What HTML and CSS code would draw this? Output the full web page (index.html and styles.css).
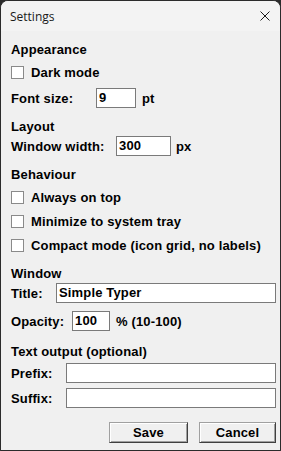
FILE: index.html
```html
<!DOCTYPE html>
<html lang="en">
<head>
  <meta charset="UTF-8" />
  <title>Settings</title>
  <link rel="stylesheet" href="styles.css">
</head>
<body>

  <div class="window">
    <div class="titlebar">
      <span class="title">Settings</span>
      <svg class="close" width="10" height="10" viewBox="0 0 10 10">
        <path d="M0.5 0.5 L9.5 9.5 M9.5 0.5 L0.5 9.5" stroke="#1a1a1a" stroke-width="1" fill="none"/>
      </svg>
    </div>

    <div class="content">
      <div class="heading first">Appearance</div>
      <label class="check after-heading"><span class="box"></span>Dark mode</label>
      <div class="field spaced">
        <span class="lbl lbl-font">Font size:</span>
        <span class="input w-font">9</span>
        <span class="unit">pt</span>
      </div>

      <div class="heading">Layout</div>
      <div class="field after-heading-tight">
        <span class="lbl lbl-width">Window width:</span>
        <span class="input w-width">300</span>
        <span class="unit unit-px">px</span>
      </div>

      <div class="heading">Behaviour</div>
      <label class="check after-heading"><span class="box"></span>Always on top</label>
      <label class="check spaced"><span class="box"></span>Minimize to system tray</label>
      <label class="check spaced"><span class="box"></span>Compact mode (icon grid, no labels)</label>

      <div class="heading section-wide">Window</div>
      <div class="field after-heading-tight">
        <span class="lbl lbl-title">Title:</span>
        <span class="input grow">Simple Typer</span>
      </div>
      <div class="field spaced">
        <span class="lbl lbl-opacity">Opacity:</span>
        <span class="input w-opacity">100</span>
        <span class="unit">% (10-100)</span>
      </div>

      <div class="heading section-wide">Text output (optional)</div>
      <div class="field after-heading-small">
        <span class="lbl lbl-fix">Prefix:</span>
        <span class="input grow"></span>
      </div>
      <div class="field spaced-small">
        <span class="lbl lbl-fix">Suffix:</span>
        <span class="input grow"></span>
      </div>

      <div class="buttons">
        <button class="btn btn-save">Save</button>
        <button class="btn btn-cancel">Cancel</button>
      </div>
    </div>
  </div>

</body>
</html>
```

FILE: styles.css
```css
* {
  box-sizing: border-box;
  margin: 0;
  padding: 0;
}

body {
  background: #2b2b2b;
  width: 281px;
  height: 451px;
  overflow: hidden;
}

.window {
  width: 281px;
  height: 451px;
  border: 1px solid #2b2b2b;
  border-radius: 8px 8px 0 0;
  background: #f0f0f0;
  overflow: hidden;
  font-family: "Liberation Sans", Arial, sans-serif;
  font-size: 13px;
  letter-spacing: 0.15px;
  font-weight: bold;
  color: #000;
}

.titlebar {
  height: 30px;
  background: #f3f3f3;
  display: flex;
  align-items: center;
  justify-content: space-between;
  padding: 0 10px 0 9px;
}

.title {
  font-family: "Open Sans", "Noto Sans", sans-serif;
  font-weight: normal;
  font-size: 12px;
  letter-spacing: 0;
  color: #1a1a1a;
}

.close {
  display: block;
}

.content {
  padding: 0 4px 0 10px;
}

.heading {
  height: 14px;
  line-height: 14px;
  margin-top: 12px;
}

.heading.first {
  margin-top: 12px;
}

.heading.section-wide {
  margin-top: 14px;
}

.check {
  display: flex;
  align-items: center;
  height: 16px;
}

.box {
  width: 13px;
  height: 13px;
  border: 1px solid #8a8a8a;
  background: #fff;
  margin-right: 7px;
  flex: none;
}

.field {
  display: flex;
  align-items: center;
  height: 20px;
}

.after-heading {
  margin-top: 7px;
}

.after-heading-tight {
  margin-top: 2px;
}

.after-heading-small {
  margin-top: 4px;
}

.spaced {
  margin-top: 8px;
}

.spaced-small {
  margin-top: 5px;
}

.lbl {
  flex: none;
}

.lbl-font { width: 85px; }
.lbl-width { width: 105px; }
.lbl-title { width: 45px; }
.lbl-opacity { width: 61px; }
.lbl-fix { width: 55px; }

.input {
  height: 20px;
  line-height: 18px;
  border: 1px solid #7a7a7a;
  background: #fff;
  padding-left: 2px;
  flex: none;
}

.input.grow {
  flex: 1;
}

.w-font { width: 40px; }
.w-width { width: 55px; }
.w-opacity { width: 38px; }

.unit {
  margin-left: 6px;
}

.unit-px {
  margin-left: 5px;
}

.buttons {
  display: flex;
  justify-content: flex-end;
  gap: 11px;
  margin-top: 14px;
}

.btn {
  height: 21px;
  font-family: "Liberation Sans", Arial, sans-serif;
  font-size: 13px;
  letter-spacing: 0.15px;
  font-weight: bold;
  color: #000;
  background: #f0f0f0;
  border: 1px solid;
  border-color: #a0a0a0 #404040 #404040 #a0a0a0;
  box-shadow: inset 1px 1px #fff, inset -1px -1px #a0a0a0;
}

.btn-save { width: 79px; }
.btn-cancel { width: 77px; }
```
